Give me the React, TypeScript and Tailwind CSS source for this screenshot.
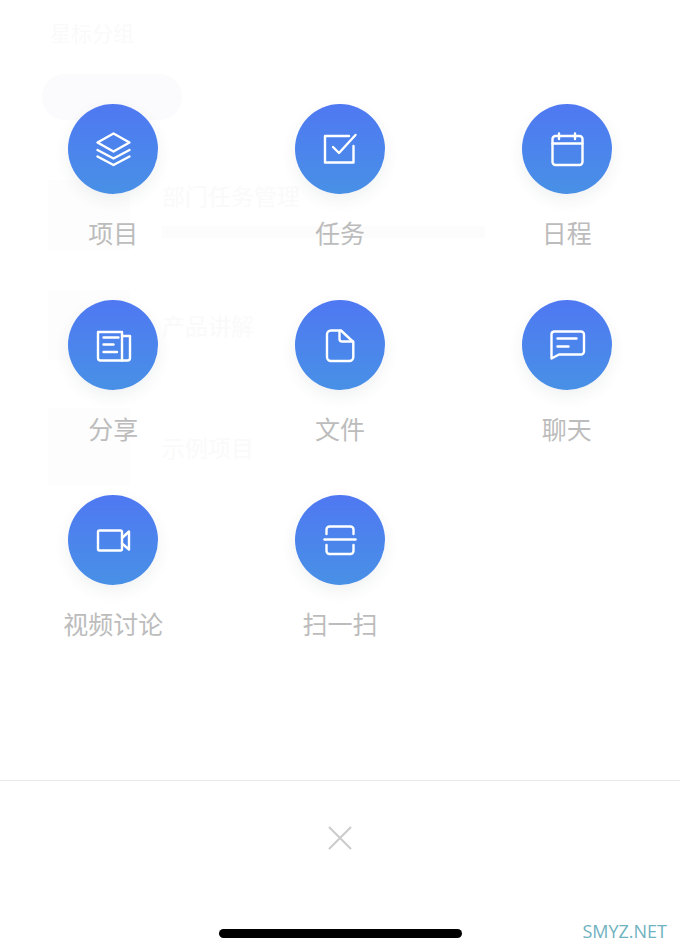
import React from "react";

const icons: Record<string, React.ReactNode> = {
  layers: (
    <>
      <path d="M20.5 4.5 L36.5 13.5 L20.5 22.5 L4.5 13.5 Z" />
      <path d="M4.5 21 L20.5 29.5 L36.5 21" />
      <path d="M4.5 27.5 L20.5 36 L36.5 27.5" />
    </>
  ),
  task: (
    <>
      <path d="M29 7 H5 V33.5 H33.5 V17" />
      <path d="M13 18 L19 24 L35.5 6" />
    </>
  ),
  calendar: (
    <>
      <rect x="5.5" y="7" width="30" height="29" rx="3" />
      <path d="M5.5 14.5 H35.5 M12 4.5 V10 M28 4.5 V10" />
    </>
  ),
  news: (
    <>
      <path d="M29 35.5 H7.5 a2.5 2.5 0 0 1 -2.5 -2.5 V7 H29 Z" />
      <path d="M29 11 H37 V33 a2.5 2.5 0 0 1 -2.5 2.5 H29" />
      <path d="M10.5 12.5 H25.5 M10.5 19.5 H20.5 M10.5 27 H24" />
    </>
  ),
  file: (
    <>
      <path d="M11 5.5 H21 L33.3 17 V32 a4 4 0 0 1 -4 4 H11 a4 4 0 0 1 -4 -4 V9.5 a4 4 0 0 1 4 -4 Z" />
      <path d="M19.5 6 V14 a2.5 2.5 0 0 0 2.5 2.5 H33" />
    </>
  ),
  chat: (
    <>
      <path d="M7 6.5 H34 a3 3 0 0 1 3 3 V26.5 a3 3 0 0 1 -3 3 H12 L4.5 33.5 V9.5 a3 3 0 0 1 2.5 -3 Z" />
      <path d="M10.5 13.5 H29.5 M10.5 21.5 H21.5" />
    </>
  ),
  video: (
    <>
      <rect x="5" y="10.5" width="24" height="20" rx="1.5" />
      <path d="M29 18 L36 11.5 V29.5 L29 23.5" />
    </>
  ),
  scan: (
    <>
      <path d="M6.5 14 V9.5 a3 3 0 0 1 3 -3 H30.5 a3 3 0 0 1 3 3 V14" />
      <path d="M4.5 19.5 H35.5" />
      <path d="M6.5 25 V31 a3 3 0 0 0 3 3 H30.5 a3 3 0 0 0 3 -3 V25" />
    </>
  ),
};

const items = [
  { label: "项目", icon: "layers" },
  { label: "任务", icon: "task" },
  { label: "日程", icon: "calendar" },
  { label: "分享", icon: "news" },
  { label: "文件", icon: "file" },
  { label: "聊天", icon: "chat" },
  { label: "视频讨论", icon: "video" },
  { label: "扫一扫", icon: "scan" },
];

function ActionItem({ label, icon }: { label: string; icon: string }) {
  return (
    <div className="flex h-[195.5px] flex-col items-center">
      <div className="flex h-[90px] w-[90px] items-center justify-center rounded-full bg-gradient-to-b from-[#4f78f2] to-[#4890e6] shadow-[0_6px_16px_rgba(40,50,70,0.07)]">
        <svg
          width="40"
          height="40"
          viewBox="0 0 40 40"
          fill="none"
          stroke="white"
          strokeWidth="2.4"
          strokeLinejoin="round"
          strokeLinecap="round"
        >
          {icons[icon]}
        </svg>
      </div>
      <span className="mt-5 text-[25px] leading-9 text-[#bcbcbc]">{label}</span>
    </div>
  );
}

function GhostRow({ title, className, subtitle }: { title: string; className: string; subtitle?: boolean }) {
  return (
    <div className={`flex gap-8 ${className}`}>
      <div className="h-full w-[82px] shrink-0 bg-[#fdfdfd]" />
      <div className="flex flex-1 flex-col gap-4">
        <span className="text-[23px] leading-[30px] text-[#fafafa]">{title}</span>
        {subtitle && <div className="h-3 w-[323px] bg-[#fcfcfc]" />}
      </div>
    </div>
  );
}

export default function App() {
  return (
    <div className="relative flex h-[951px] w-[680px] flex-col overflow-hidden bg-white [font-family:'Noto_Sans_CJK_SC','Noto_Sans',sans-serif]">
      {/* page underneath the white sheet, barely visible */}
      <div className="absolute inset-0 flex flex-col pl-[48px] pt-[17px]">
        <span className="pl-[2px] text-[21px] leading-[30px] text-[#fafafa]">星标分组</span>
        <div className="-ml-[6px] mt-[27px] h-[46px] w-[140px] rounded-full bg-[#fbfbfd]" />
        <GhostRow title="部门任务管理" className="mt-[60px] h-[70px]" subtitle />
        <GhostRow title="产品讲解" className="mt-10 h-[70px] [&>div:last-child]:pt-5" />
        <GhostRow title="示例项目" className="mt-12 h-[78px] [&>div:last-child]:pt-6" />
      </div>

      <div className="relative grid h-[780px] grid-cols-3 content-start pt-[104px]">
        {items.map((item) => (
          <ActionItem key={item.label} label={item.label} icon={item.icon} />
        ))}
      </div>

      <div className="relative flex flex-1 flex-col items-center border-t-[1.5px] border-[#e9e9e9]">
        <svg className="mt-11" width="26" height="26" viewBox="0 0 26 26" fill="none" stroke="#cbcbcb" strokeWidth="2">
          <path d="M2 2 L24 24 M24 2 L2 24" />
        </svg>
        <div className="mt-[78px] h-[9px] w-[243px] rounded-full bg-black" />
        <span className="absolute right-[13px] bottom-[7px] text-[18px] leading-[26px] text-[#6fb2c0] [font-family:'Open_Sans',sans-serif]">
          SMYZ.NET
        </span>
      </div>
    </div>
  );
}
